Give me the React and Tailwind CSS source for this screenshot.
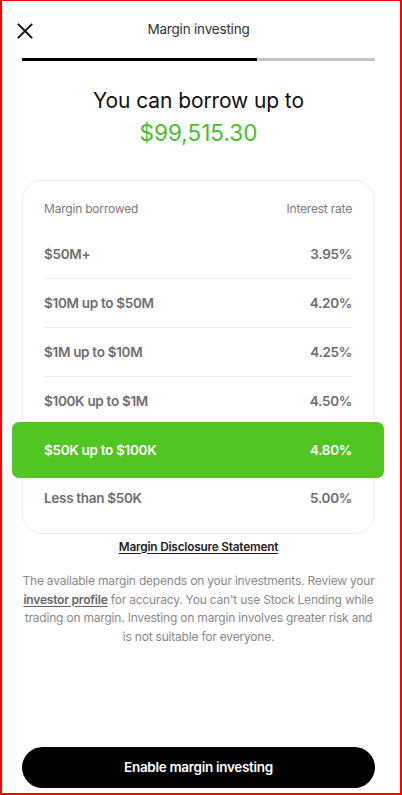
const tiers = [
  { range: '$50M+', rate: '3.95%' },
  { range: '$10M up to $50M', rate: '4.20%' },
  { range: '$1M up to $10M', rate: '4.25%' },
  { range: '$100K up to $1M', rate: '4.50%' },
  { range: '$50K up to $100K', rate: '4.80%', active: true },
  { range: 'Less than $50K', rate: '5.00%' },
]

function CloseIcon() {
  return (
    <svg width="16" height="16" viewBox="0 0 16 16" fill="none" stroke="#111" strokeWidth="1.9" strokeLinecap="square">
      <path d="M1.5 1.5L14.5 14.5M14.5 1.5L1.5 14.5" />
    </svg>
  )
}

export default function App() {
  return (
    <div
      className="w-[402px] h-[795px] border-2 border-t border-[#ff0000] bg-white flex flex-col text-[#111]"
      style={{ fontFamily: 'Inter, "Noto Sans", sans-serif' }}
    >
      <div className="pl-[20px] pr-[25px] flex flex-col flex-1">
        {/* Top bar */}
        <div className="relative h-[57px] flex items-center justify-center">
          <button className="absolute left-[-5px] top-[22px] p-0" aria-label="Close">
            <CloseIcon />
          </button>
          <span className="text-[13.5px] tracking-[-0.2px] text-[#333]">Margin investing</span>
        </div>

        {/* Progress */}
        <div className="h-[3px] bg-[#c4c4c4] flex">
          <div className="h-full w-[235px] bg-black" />
        </div>

        {/* Heading */}
        <h1 className="mt-[24px] text-center text-[21px] tracking-[-0.1px] leading-[32px] text-[#111]">You can borrow up to</h1>
        <div className="text-center text-[22.5px] leading-[32px] text-[#49c02b]">$99,515.30</div>

        {/* Rates card */}
        <div className="mt-[31px] border border-[#ececec] rounded-[20px] pl-[21px] pr-[22px] pt-[20px] pb-[15px]">
          <div className="flex justify-between text-[12px] tracking-[-0.2px] leading-[16px] text-[#7a7a7a]">
            <span>Margin borrowed</span>
            <span>Interest rate</span>
          </div>
          <div className="mt-[13px]">
            {tiers.map((t, i) => {
              if (t.active) {
                return (
                  <div
                    key={t.range}
                    className="-mx-[32px] -mt-[3px] h-[56px] px-[32px] rounded-[7px] bg-[#51c521] flex items-center justify-between text-white text-[13.5px] tracking-[-0.3px] font-semibold"
                  >
                    <span>{t.range}</span>
                    <span>{t.rate}</span>
                  </div>
                )
              }
              const bordered = i < 3
              const last = i === tiers.length - 1
              return (
                <div
                  key={t.range}
                  className={
                    'flex items-center justify-between text-[13.5px] tracking-[-0.3px] font-semibold text-[#6e6e6e] ' +
                    (last ? 'h-[40px]' : 'h-[48px]') +
                    (bordered ? ' border-b border-[#ececec] h-[49px]' : '')
                  }
                >
                  <span>{t.range}</span>
                  <span>{t.rate}</span>
                </div>
              )
            })}
          </div>
        </div>

        <a href="#" className="mt-[4px] self-center text-[11.8px] tracking-[-0.2px] leading-[18px] font-semibold text-[#222] underline underline-offset-2">
          Margin Disclosure Statement
        </a>

        <p className="mt-[16px] -mx-[2px] text-center text-[12px] tracking-[-0.2px] leading-[18.7px] text-[#8a8a8a] whitespace-nowrap">
          The available margin depends on your investments. Review your
          <br />
          <span className="font-semibold text-[#666] underline underline-offset-2">investor profile</span> for accuracy. You can't use Stock Lending while
          <br />
          trading on margin. Investing on margin involves greater risk and
          <br />
          is not suitable for everyone.
        </p>

        <button className="mt-auto mb-[5px] h-[41px] w-full rounded-full bg-black text-white text-[13.5px] tracking-[-0.3px] font-semibold">
          Enable margin investing
        </button>
      </div>
    </div>
  )
}
